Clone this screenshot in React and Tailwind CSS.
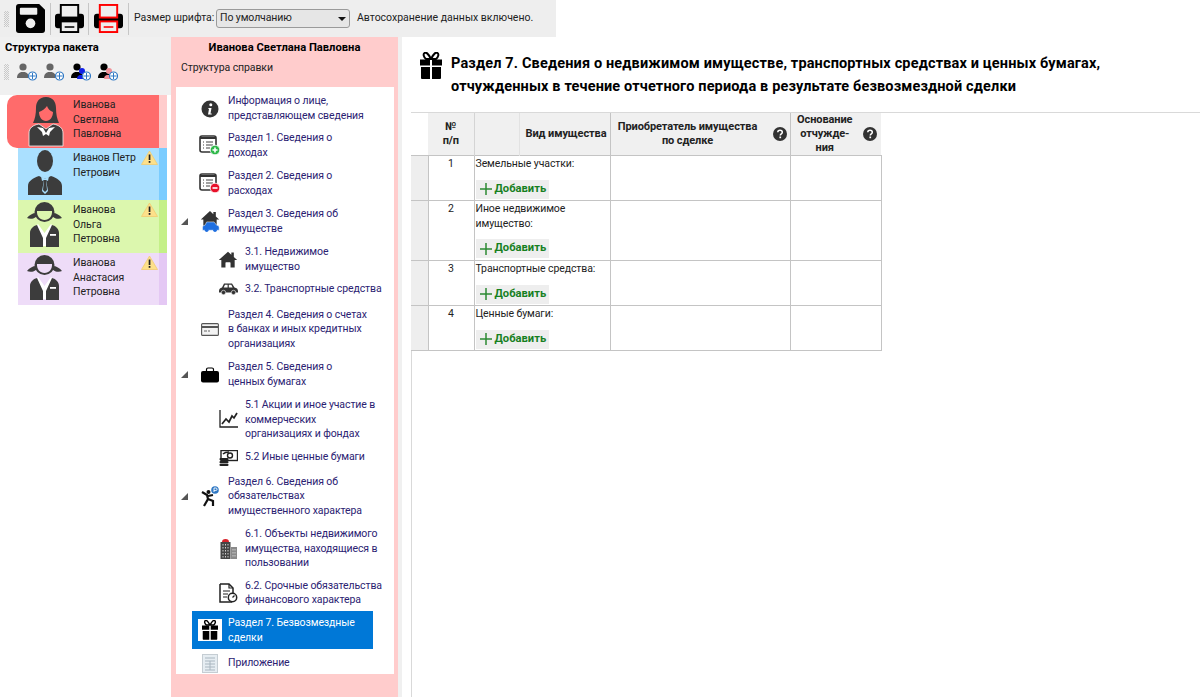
import React from 'react';

const font = { fontFamily: 'Roboto, "Noto Sans", sans-serif' };

const Grip = ({ className }) => (
  <div className={`w-[5px] bg-[repeating-conic-gradient(#c8c8c8_0_25%,transparent_0_50%)] bg-[length:2px_2px] ${className}`} />
);

const Sep = () => <div className="w-px h-[32px] bg-[#c6c6c6]" />;

const SaveIcon = () => (
  <svg width="29" height="29" viewBox="0 0 30 30">
    <path d="M3 0h21l6 6v21a3 3 0 0 1-3 3H3a3 3 0 0 1-3-3V3a3 3 0 0 1 3-3z" fill="#000" />
    <rect x="4" y="4" width="18" height="7" rx="1" fill="#eee" />
    <circle cx="15" cy="20" r="5" fill="#eee" />
  </svg>
);

const PrintIcon = ({ accent = '#000', paper = '#eee' }) => (
  <svg width="29" height="29" viewBox="0 0 30 30">
    <rect x="0" y="10" width="30" height="15" rx="3" fill="#000" />
    <rect x="6" y="1" width="18" height="13" fill={paper} stroke={accent} strokeWidth="2" />
    <rect x="6" y="18" width="18" height="11" fill={paper} stroke={accent} strokeWidth="2" />
    <rect x="10" y="23" width="10" height="1.6" fill={accent} />
  </svg>
);

const AddPerson = ({ head = '#666', second }) => (
  <svg width="21" height="18" viewBox="0 0 21 18">
    <circle cx="7" cy="4" r="3.6" fill={head} />
    <path d="M1 15c0-4 2-5 4-6h4c2 1 4 2 4 6z" fill={head} />
    {second && <circle cx="12" cy="8" r="3" fill={second} />}
    {second && <path d="M7 16c0-3 2-4 3-4h4c2 0 3 2 3 4z" fill={second} />}
    <circle cx="16.5" cy="13" r="4" fill="#fff" stroke="#2f78c4" strokeWidth="1.2" />
    <path d="M16.5 10v6M13.5 13h6" stroke="#2f78c4" strokeWidth="1" />
  </svg>
);

const Woman = () => (
  <svg width="36" height="50" viewBox="0 0 36 50">
    <path d="M18 0c-7 0-10 5-10 11 0 6-1 11-3 15h26c-2-4-3-9-3-15 0-6-3-11-10-11z" fill="#3c3c3c" />
    <path d="M11 15c3-1 6-3 8-6 1 3 3 5 6 6 0 5-3 9-7 9s-7-4-7-9z" fill="#ff6b6b" />
    <path d="M1 49V36c0-5 4-8 10-9l7 5 7-5c6 1 10 4 10 9v13z" fill="#3c3c3c" stroke="#f3f3f3" strokeWidth="0.8" />
    <path d="M9 30l6 1 3 5 3-5 6-1-5 5-1 4-3-2-3 2-1-4z" fill="#fff" />
  </svg>
);

const Man = () => (
  <svg width="36" height="45" viewBox="0 0 36 45">
    <ellipse cx="18" cy="11" rx="8" ry="11" fill="#3c3c3c" />
    <path d="M1 45v-9c0-5 5-8 11-10l6 3 6-3c6 2 11 5 11 10v9z" fill="#3c3c3c" />
    <path d="M14 26l4 3 4-3-1 5-2-1 2 11-3 3-3-3 2-11-2 1z" fill="#aae0ff" />
    <path d="M17 30h2l1 10-2 2-2-2z" fill="#3c3c3c" />
  </svg>
);

const Girl = ({ bg }) => (
  <svg width="37" height="45" viewBox="0 0 37 45">
    <circle cx="18.500" cy="10" r="10" fill="#3c3c3c" />
    <path d="M10 11c-3 0-7 2-9 5 3 1.500 7 1 10-2zM27 11c3 0 7 2 9 5-3 1.500-7 1-10-2z" fill="#3c3c3c" />
    <path d="M11 9h15c.5 5-3 9-7.500 9S10.500 14 11 9z" fill={bg} />
    <path d="M12 22l6.500 9 6.500-9 2 2-4 20H14l-4-20z" fill="#fff" />
    <path d="M4 45V31c0-4 3-7 7-8l6 13v9zM33 45V31c0-4-3-7-7-8l-6 13v9z" fill="#3c3c3c" />
    <rect x="24" y="32" width="6" height="1.800" fill="#fff" />
  </svg>
);

const Warn = () => (
  <svg width="17" height="15" viewBox="0 0 17 15">
    <path d="M8.500 1L16.500 14.500H.5z" fill="#fde08a" stroke="#f2cc70" strokeWidth="0.8" strokeLinejoin="round" />
    <rect x="7.700" y="4.500" width="1.700" height="5.500" fill="#222" />
    <rect x="7.700" y="11" width="1.700" height="1.800" fill="#222" />
  </svg>
);

const Gift = ({ size = 22 }) => (
  <svg width={size} height={size * 1.25} viewBox="0 0 22 27.500">
    <path d="M11 7C8 1 6 0 4.500 1 3 2 3.500 5 6 7zM11 7c3-6 5-7 6.500-6 1.500 1 1 4-1.500 6z" fill="none" stroke="#000" strokeWidth="2" />
    <path d="M0 7.500h10v6H0zM12 7.500h10v6H12zM1 15h9v12H2a1 1 0 0 1-1-1zM12 15h9v11a1 1 0 0 1-1 1h-8z" fill="#000" />
  </svg>
);

const ListDoc = ({ badge, sign }) => (
  <svg width="22" height="21" viewBox="0 0 22 21">
    <rect x="1" y="1" width="16" height="16" rx="2" fill="#fff" stroke="#333" strokeWidth="1.600" />
    <path d="M1 3h16" stroke="#333" strokeWidth="2" />
    <path d="M4 7h1M7 7h7M4 10h1M7 10h7M4 13h1M7 13h4" stroke="#444" strokeWidth="1.200" />
    <circle cx="16" cy="15" r="4.800" fill={badge} stroke="#fff" strokeWidth="0.8" />
    <path d={sign === 'plus' ? 'M13.500 15h5M16 12.500v5' : 'M13.500 15h5'} stroke="#fff" strokeWidth="1.600" />
  </svg>
);

const InfoIcon = () => (
  <svg width="18" height="18" viewBox="0 0 18 18">
    <circle cx="9" cy="9" r="8.500" fill="#333" />
    <circle cx="9.800" cy="4.800" r="1.500" fill="#fff" />
    <path d="M7.500 8h3l-1 5.500h1.200v1H7l1-5.500H7.300z" fill="#fff" />
  </svg>
);

const HousePath = 'M12 1L1 11h3v9h5v-6h6v6h5v-9h3l-4-3.600V2h-3v2.700z';

const HouseCar = () => (
  <svg width="20" height="23" viewBox="0 0 24 27">
    <path d={HousePath} fill="#333" />
    <path d="M3 21c0-2 1-3 3-3l2-4h9l3 4c2 0 3 1 3 3v3H3z" fill="#1f6fe0" stroke="#fff" strokeWidth="0.6" />
    <circle cx="8" cy="24" r="2.200" fill="#1f6fe0" />
    <circle cx="18" cy="24" r="2.200" fill="#1f6fe0" />
  </svg>
);

const House = () => (
  <svg width="20" height="20" viewBox="0 0 24 22">
    <path d={HousePath} fill="#333" />
    <rect x="9.500" y="14" width="5" height="6" fill="#fff" />
  </svg>
);

const Car = () => (
  <svg width="19" height="12" viewBox="0 0 19 12">
    <path d="M0 8c0-2 1-3 3-3.500L5 .5h8l2.500 4c2 .3 3.500 1.500 3.500 3.500v1.500H0z" fill="#333" />
    <path d="M6 1.800h2.600V4.500H4.700zM9.800 1.800h2.500l1.400 2.700H9.800z" fill="#fff" />
    <circle cx="4.500" cy="9.500" r="2.200" fill="#333" stroke="#fff" strokeWidth="0.6" />
    <circle cx="14.500" cy="9.500" r="2.200" fill="#333" stroke="#fff" strokeWidth="0.6" />
  </svg>
);

const Card = () => (
  <svg width="18" height="13" viewBox="0 0 18 13">
    <rect x="0.600" y="0.600" width="16.800" height="11.800" rx="1" fill="#f3f3f3" stroke="#555" strokeWidth="1.100" />
    <rect x="1" y="3" width="16" height="2" fill="#555" />
    <path d="M3 8h3M7 8h2" stroke="#666" strokeWidth="1" />
  </svg>
);

const Bag = () => (
  <svg width="18" height="16" viewBox="0 0 18 16">
    <path d="M5.500 4V2.500A1.500 1.500 0 0 1 7 1h4a1.500 1.500 0 0 1 1.500 1.500V4" fill="none" stroke="#000" strokeWidth="1.200" />
    <rect x="0" y="4" width="18" height="11.500" rx="2" fill="#000" />
  </svg>
);

const Chart = () => (
  <svg width="19" height="19" viewBox="0 0 19 19">
    <path d="M1 0v17h18" fill="none" stroke="#222" strokeWidth="1.300" />
    <path d="M3 14l4-5 3 3 3-6 2 2 3-5" fill="none" stroke="#222" strokeWidth="1.700" />
  </svg>
);

const Papers = () => (
  <svg width="19" height="16" viewBox="0 0 19 16">
    <rect x="2" y="0.500" width="16.500" height="10" fill="#fff" stroke="#222" strokeWidth="1.400" />
    <circle cx="11" cy="5.500" r="2.500" fill="none" stroke="#222" strokeWidth="1.400" />
    <path d="M4 4c2-2 4-2 6-2" stroke="#222" strokeWidth="1.600" fill="none" />
    <rect x="0.500" y="8" width="9" height="2.300" rx="1" fill="#222" />
    <rect x="0.500" y="11" width="9" height="2.300" rx="1" fill="#222" />
    <rect x="0.500" y="13.700" width="9" height="2.300" rx="1" fill="#222" />
  </svg>
);

const Runner = () => (
  <svg width="19" height="21" viewBox="0 0 19 21">
    <circle cx="7.500" cy="6" r="2" fill="#111" />
    <path d="M1 6l5 3 1 4-4 7M7 10l5-1M7 13l5 2 0 5" fill="none" stroke="#111" strokeWidth="2.200" />
    <circle cx="14" cy="4" r="3.800" fill="#2f78c4" />
    <path d="M13 6V2h1.800a1.100 1.100 0 0 1 0 2.500H13" fill="none" stroke="#fff" strokeWidth="0.9" />
  </svg>
);

const Office = () => (
  <svg width="17" height="20" viewBox="0 0 17 20">
    <path d="M2 3a3.500 3 0 0 1 7 0z" fill="#d8222a" />
    <rect x="0.500" y="3" width="10" height="17" fill="#444" />
    <rect x="11" y="8" width="6" height="12" fill="#8a8a8a" />
    <path d="M3 5v14M5.500 5v14M8 5v14" stroke="#ccc" strokeWidth="1" strokeDasharray="1.500 1.500" />
    <path d="M13 10v9M15 10v9" stroke="#ddd" strokeWidth="0.8" strokeDasharray="1.500 1.500" />
  </svg>
);

const Contract = () => (
  <svg width="19" height="20" viewBox="0 0 19 20">
    <path d="M1 1h9l4 4v6M13 19H1V1" fill="#fff" stroke="#222" strokeWidth="1.500" />
    <path d="M10 1v4h4M4 8h7M4 11h5M4 14h4" fill="none" stroke="#222" strokeWidth="1.200" />
    <circle cx="13.500" cy="14.500" r="4.200" fill="#fff" stroke="#222" strokeWidth="1.500" />
    <path d="M13.500 14.500l2-2" stroke="#222" strokeWidth="1.200" />
  </svg>
);

const Sheet = () => (
  <svg width="16" height="19" viewBox="0 0 16 19">
    <rect x="0.500" y="0.500" width="15" height="18" fill="#e6edf2" stroke="#c5cdd3" />
    <path d="M3 4h10M3 7h10M3 10h10M3 13h10M3 16h10M8 7v9" stroke="#a9b6c0" strokeWidth="1" />
  </svg>
);

const Expander = () => (
  <svg width="7" height="7" viewBox="0 0 7 7" className="ml-[5px]">
    <path d="M7 0v7H0z" fill="#555" />
  </svg>
);

const HelpIcon = () => (
  <svg width="14" height="14" viewBox="0 0 14 14" className="shrink-0">
    <circle cx="7" cy="7" r="7" fill="#333" />
    <path d="M4.800 5.300C4.800 4 5.800 3.200 7 3.200s2.300.8 2.300 2c0 1.700-2 1.600-2 3.300" fill="none" stroke="#fff" strokeWidth="1.500" />
    <rect x="6.400" y="9.500" width="1.700" height="1.700" fill="#fff" />
  </svg>
);

const PlusBtn = () => (
  <div className="mt-[8px] flex items-center w-[73px] h-[19px] bg-[#eeeeee] pl-[4px] gap-[3px] text-[#17801f] text-[11.200px] tracking-normal font-bold">
    <svg width="12" height="12" viewBox="0 0 12 12">
      <path d="M6 0v12M0 6h12" stroke="#2c8a33" strokeWidth="1.500" />
    </svg>
    <span>Добавить</span>
  </div>
);

const people = [
  { lines: ['Иванова', 'Светлана', 'Павловна'], rowCls: 'ml-[7px] h-[53px] bg-[#ff6b6b] rounded-l-[10px]', strip: 'bg-[#ffcccc]', avatar: <Woman />, avatarCls: 'ml-[21px] w-[36px]', textCls: 'ml-[9px] pt-[3px]' },
  { lines: ['Иванов Петр', 'Петрович'], rowCls: 'ml-[18px] h-[52px] bg-[#aae0ff]', strip: 'bg-[#7accff]', avatar: <Man />, avatarCls: 'ml-[9px] w-[36px]', textCls: 'ml-[10px] pt-[3px]', warn: true },
  { lines: ['Иванова', 'Ольга', 'Петровна'], rowCls: 'h-[53px] ml-[18px] bg-[#dcf7ae]', strip: 'bg-[#c4f088]', avatar: <Girl bg="#dcf7ae" />, avatarCls: 'ml-[8px] w-[37px]', textCls: 'ml-[10px] pt-[3px]', warn: true },
  { lines: ['Иванова', 'Анастасия', 'Петровна'], rowCls: 'h-[52px] ml-[18px] bg-[#eedcf8]', strip: 'bg-[#e4c8f4]', avatar: <Girl bg="#eedcf8" />, avatarCls: 'ml-[8px] w-[37px]', textCls: 'ml-[10px] pt-[3px]', warn: true },
];

const tree = [
  { lines: ['Информация о лице,', 'представляющем сведения'], icon: <InfoIcon />, mt: 'mt-0' },
  { lines: ['Раздел 1. Сведения о', 'доходах'], icon: <ListDoc badge="#2fb84a" sign="plus" />, mt: 'mt-[8px]' },
  { lines: ['Раздел 2. Сведения о', 'расходах'], icon: <ListDoc badge="#e8102a" sign="minus" />, mt: 'mt-[9px]' },
  { lines: ['Раздел 3. Сведения об', 'имуществе'], icon: <HouseCar />, arrow: true, mt: 'mt-[9px]' },
  { lines: ['3.1. Недвижимое', 'имущество'], icon: <House />, sub: true, mt: 'mt-[9px]' },
  { lines: ['3.2. Транспортные средства'], icon: <Car />, sub: true, mt: 'mt-[8px]' },
  { lines: ['Раздел 4. Сведения о счетах', 'в банках и иных кредитных', 'организациях'], icon: <Card />, mt: 'mt-[11px]' },
  { lines: ['Раздел 5. Сведения о', 'ценных бумагах'], icon: <Bag />, arrow: true, mt: 'mt-[9px]' },
  { lines: ['5.1 Акции и иное участие в', 'коммерческих', 'организациях и фондах'], icon: <Chart />, sub: true, mt: 'mt-[9px]' },
  { lines: ['5.2 Иные ценные бумаги'], icon: <Papers />, sub: true, mt: 'mt-[8px]' },
  { lines: ['Раздел 6. Сведения об', 'обязательствах', 'имущественного характера'], icon: <Runner />, arrow: true, mt: 'mt-[9px]' },
  { lines: ['6.1. Объекты недвижимого', 'имущества, находящиеся в', 'пользовании'], icon: <Office />, sub: true, mt: 'mt-[9px]' },
  { lines: ['6.2. Срочные обязательства', 'финансового характера'], icon: <Contract />, sub: true, mt: 'mt-[8px]' },
  { lines: ['Раздел 7. Безвозмездные', 'сделки'], icon: <Gift size={16} />, active: true, mt: 'mt-[3px]' },
  { lines: ['Приложение'], icon: <Sheet />, mt: 'mt-[5px]' },
];

const assets = [
  { n: 1, lines: ['Земельные участки:'], h: 'h-[45px]' },
  { n: 2, lines: ['Иное недвижимое', 'имущество:'], h: 'h-[60px]' },
  { n: 3, lines: ['Транспортные средства:'], h: 'h-[45px]' },
  { n: 4, lines: ['Ценные бумаги:'], h: 'h-[45px]' },
];

const TreeRow = ({ row }) => (
  <div className={`flex items-center ${row.mt}`}>
    <div className="w-[16px] shrink-0 flex items-center">{row.arrow && <Expander />}</div>
    <div className={`w-[181px] flex items-center ${row.sub ? 'pl-[24px]' : 'pl-[6px]'} ${row.active ? 'bg-[#0078d7] text-white h-[38px]' : 'text-[#2b2272]'}`}>
      <div className={`flex items-center justify-center w-[24px] shrink-0 ${row.active ? 'h-[22px] bg-white' : ''}`}>{row.icon}</div>
      <div className={`whitespace-nowrap ${row.sub ? 'ml-[5px]' : 'ml-[6px]'} ${row.active ? 'pt-[2px]' : ''}`}>
        {row.lines.map((l) => <div key={l}>{l}</div>)}
      </div>
    </div>
  </div>
);

export default function App() {
  return (
    <div style={font} className="w-[1200px] h-[697px] overflow-hidden bg-white flex flex-col text-[10.500px] tracking-[-0.1px] leading-[14.5px] text-[#222]">
      {/* toolbar */}
      <div className="w-[556px] h-[37px] shrink-0 bg-[#eeeeee] flex items-center pl-[4px] whitespace-nowrap">
        <Grip className="h-[16px] mr-[7px]" />
        <SaveIcon />
        <div className="ml-[5px] mr-[4px]"><Sep /></div>
        <PrintIcon />
        <div className="ml-[4px] mr-[5px]"><Sep /></div>
        <PrintIcon accent="#ff0000" />
        <div className="ml-[5px] mr-[5px]"><Sep /></div>
        <span className="w-[79px] tracking-normal">Размер шрифта:</span>
        <div className="ml-[3px] w-[134px] h-[19px] border border-[#9a9a9a] rounded-[3px] bg-[#e6e6e6] flex items-center justify-between pl-[3px] pr-[3px]">
          <span>По умолчанию</span>
          <svg width="8" height="4" viewBox="0 0 8 4"><path d="M0 0h8L4 4z" fill="#111" /></svg>
        </div>
        <span className="ml-[7px] tracking-normal">Автосохранение данных включено.</span>
      </div>

      <div className="flex flex-1 min-h-0">
        {/* package structure */}
        <div className="w-[171px] shrink-0">
          <div className="h-[58px] bg-[#f0f0f0] pt-[4px]">
            <div className="pl-[5px] font-bold text-black text-[11.200px] tracking-normal">Структура пакета</div>
            <div className="flex items-center mt-[7px] pl-[4px]">
              <Grip className="h-[16px] mr-[7px]" />
              <div className="flex gap-[6px]">
                <AddPerson />
                <AddPerson />
                <AddPerson head="#000" second="#1020e8" />
                <AddPerson head="#000" second="#f09098" />
              </div>
            </div>
          </div>
          <div className="w-[167px]">
            {people.map((p) => (
              <div key={p.lines.join()} className={`relative flex ${p.rowCls}`}>
                <div className={`${p.avatarCls} shrink-0 pt-[2px]`}>{p.avatar}</div>
                <div className={`${p.textCls} flex-1 whitespace-nowrap text-[#222]`}>
                  {p.lines.map((l) => <div key={l}>{l}</div>)}
                </div>
                <div className={`w-[8px] shrink-0 ${p.strip}`} />
                {p.warn && <div className="absolute right-[9px] top-[2px]"><Warn /></div>}
              </div>
            ))}
          </div>
        </div>

        {/* certificate structure */}
        <div className="w-[227px] shrink-0 bg-[#ffcccc] flex flex-col">
          <div className="text-center font-bold text-black pt-[4px] text-[11.200px] tracking-normal">Иванова Светлана Павловна</div>
          <div className="pl-[10px] mt-[5px]">Структура справки</div>
          <div className="mx-[5px] mt-[12px] w-[218px] h-[587px] bg-white pt-[7px]">
            {tree.map((r) => <TreeRow key={r.lines[0]} row={r} />)}
          </div>
        </div>
        <div className="w-[4px] shrink-0 bg-[#f0f0f0]" />

        {/* section 7 */}
        <div className="flex-1 min-w-0 flex flex-col">
          <div className="h-[75px] shrink-0 flex pl-[18px] pt-[15px]">
            <Gift size={22} />
            <h1 className="ml-[9px] text-[14.500px] tracking-[0.15px] leading-[23px] font-bold text-black whitespace-nowrap">
              Раздел 7. Сведения о недвижимом имуществе, транспортных средствах и ценных бумагах,
              <br />
              отчужденных в течение отчетного периода в результате безвозмездной сделки
            </h1>
          </div>
          <div className="flex-1 ml-[9px] border-l border-t border-[#d9d9d9]">
            <table className="table-fixed border-collapse w-[470px] -ml-px">
              <colgroup>
                <col className="w-[17px]" />
                <col className="w-[46px]" />
                <col className="w-[45px]" />
                <col className="w-[91px]" />
                <col className="w-[180px]" />
                <col className="w-[91px]" />
              </colgroup>
              <thead>
                <tr className="h-[42px] bg-[#f0f0f0] text-[11px] leading-[14px]">
                  <th className="bg-white" />
                  <th className="border-r border-[#d4d4d4] text-center font-bold">№<br />п/п</th>
                  <th className="border-r border-[#e2e2e2]" />
                  <th className="border-r border-[#c4c4c4] text-right pr-[3px] font-bold whitespace-nowrap">Вид имущества</th>
                  <th className="border-r border-[#c4c4c4] font-bold">
                    <div className="flex items-center pr-[3px]">
                      <div className="flex-1 text-center pr-[8px]">Приобретатель имущества<br />по сделке</div>
                      <HelpIcon />
                    </div>
                  </th>
                  <th className="font-bold">
                    <div className="flex items-center pr-[4px]">
                      <div className="flex-1 text-center pr-[4px]">Основание<br />отчужде-<br />ния</div>
                      <HelpIcon />
                    </div>
                  </th>
                </tr>
              </thead>
              <tbody>
                {assets.map((a) => (
                  <tr key={a.n} className={a.h}>
                    <td className="bg-[#eeeeee] border-y border-r border-[#c4c4c4]" />
                    <td className="border border-[#c4c4c4] align-top text-center pt-px">{a.n}</td>
                    <td colSpan={2} className="border border-[#c4c4c4] align-top pl-[1px] pt-px">
                      {a.lines.map((l) => <div key={l} className="whitespace-nowrap">{l}</div>)}
                      <PlusBtn />
                    </td>
                    <td className="border border-[#c4c4c4]" />
                    <td className="border border-[#c4c4c4]" />
                  </tr>
                ))}
              </tbody>
            </table>
          </div>
        </div>
      </div>
    </div>
  );
}
